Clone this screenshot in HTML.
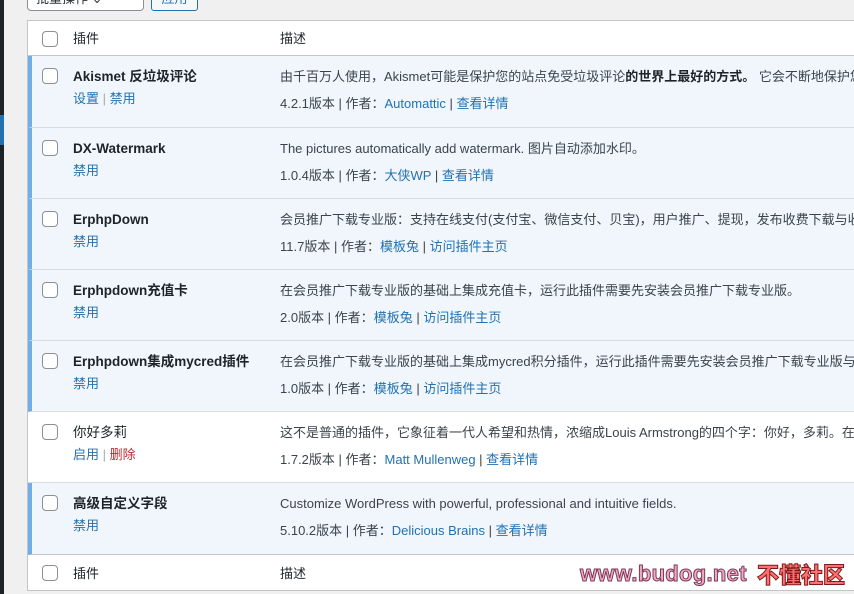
<!DOCTYPE html>
<html><head><meta charset="utf-8"><style>
*{margin:0;padding:0;box-sizing:border-box}
body{width:854px;height:594px;overflow:hidden;background:#f0f0f1;font-family:"Liberation Sans","Noto Sans CJK SC",sans-serif;font-size:13px;line-height:18px;color:#3c434a;position:relative}
div,span{line-height:18px}
.side{position:absolute;left:0;top:0;width:4px;height:594px;background:#1d2327}
.sel{position:absolute;left:27px;top:-12px;width:117px;height:23px;border:1px solid #8c8f94;border-radius:4px;background:#fff;font-size:13px;padding:0 8px;line-height:20px;color:#2c3338}
.btn{position:absolute;left:151px;top:-12px;width:47px;height:23px;border:1px solid #2271b1;border-radius:3px;background:#f6f7f7;color:#2271b1;text-align:center;line-height:20px}
.tbl{position:absolute;left:27px;top:20px;width:840px;height:571px;border:1px solid #c3c4c7;background:#fff}
.row{position:absolute;left:0;width:840px;border-bottom:1px solid #dcdcde}
.act{background:#f0f6fc;border-left:4px solid #72aee6}
.cb{position:absolute;left:14px;width:16px;height:16px;border:1px solid #8c8f94;border-radius:4px;background:#fff}
.t{position:absolute;left:45px;font-weight:bold;color:#1d2327;font-size:13.5px;white-space:nowrap}
.a{position:absolute;left:45px;color:#2271b1;white-space:nowrap}
.d{position:absolute;left:252px;white-space:nowrap}
.m{position:absolute;left:252px;white-space:nowrap}
a{color:#2271b1;text-decoration:none}
.sep{color:#a7aaad}
.del{color:#b32d2e}
.h{position:absolute;white-space:nowrap;color:#1d2327}
.wm{position:absolute;left:580px;top:562px;font-family:"Liberation Sans",sans-serif;font-weight:bold;font-size:22px;line-height:24px;color:#f0a8c8;-webkit-text-stroke:1px #7a3a55;letter-spacing:0.3px}
.wm2{position:absolute;left:757px;top:561px;font-family:"Noto Sans CJK SC",sans-serif;font-weight:900;font-size:22px;line-height:26px;color:#ff7070;-webkit-text-stroke:1px #7a1a1a}
</style></head><body>
<div class="side"></div>
<div style="position:absolute;left:0;top:115px;width:4px;height:30px;background:#2271b1"></div>
<div class="sel">批量操作 ⌄</div>
<div class="btn">应用</div>
<div class="tbl">
 <div class="row" style="top:0;height:35px;border-bottom:1px solid #c3c4c7"><div class="cb" style="top:10px"></div><span class="h" style="left:45px;top:9px">插件</span><span class="h" style="left:252px;top:9px">描述</span></div>

 <div class="row act" style="top:35px;height:72px"><div class="cb" style="top:12px;left:10px"></div>
  <div class="t" style="top:12px;left:41px">Akismet 反垃圾评论</div>
  <div class="a" style="top:34px;left:41px">设置 <span class="sep">|</span> 禁用</div>
  <div class="d" style="top:12px;left:248px">由千百万人使用，Akismet可能是保护您的站点免受垃圾评论<b style="color:#1d2327">的世界上最好的方式。</b> 它会不断地保护您</div>
  <div class="m" style="top:39px;left:248px">4.2.1版本 | 作者：<a>Automattic</a> | <a>查看详情</a></div></div>

 <div class="row act" style="top:107px;height:71px"><div class="cb" style="top:12px;left:10px"></div>
  <div class="t" style="top:12px;left:41px">DX-Watermark</div>
  <div class="a" style="top:34px;left:41px">禁用</div>
  <div class="d" style="top:12px;left:248px">The pictures automatically add watermark. 图片自动添加水印。</div>
  <div class="m" style="top:39px;left:248px">1.0.4版本 | 作者：<a>大侠WP</a> | <a>查看详情</a></div></div>

 <div class="row act" style="top:178px;height:71px"><div class="cb" style="top:12px;left:10px"></div>
  <div class="t" style="top:12px;left:41px">ErphpDown</div>
  <div class="a" style="top:34px;left:41px">禁用</div>
  <div class="d" style="top:12px;left:248px">会员推广下载专业版：支持在线支付(支付宝、微信支付、贝宝)，用户推广、提现，发布收费下载与收</div>
  <div class="m" style="top:39px;left:248px">11.7版本 | 作者：<a>模板兔</a> | <a>访问插件主页</a></div></div>

 <div class="row act" style="top:249px;height:71px"><div class="cb" style="top:12px;left:10px"></div>
  <div class="t" style="top:12px;left:41px">Erphpdown充值卡</div>
  <div class="a" style="top:34px;left:41px">禁用</div>
  <div class="d" style="top:12px;left:248px">在会员推广下载专业版的基础上集成充值卡，运行此插件需要先安装会员推广下载专业版。</div>
  <div class="m" style="top:39px;left:248px">2.0版本 | 作者：<a>模板兔</a> | <a>访问插件主页</a></div></div>

 <div class="row act" style="top:320px;height:71px"><div class="cb" style="top:12px;left:10px"></div>
  <div class="t" style="top:12px;left:41px">Erphpdown集成mycred插件</div>
  <div class="a" style="top:34px;left:41px">禁用</div>
  <div class="d" style="top:12px;left:248px">在会员推广下载专业版的基础上集成mycred积分插件，运行此插件需要先安装会员推广下载专业版与</div>
  <div class="m" style="top:39px;left:248px">1.0版本 | 作者：<a>模板兔</a> | <a>访问插件主页</a></div></div>

 <div class="row" style="top:391px;height:71px"><div class="cb" style="top:12px"></div>
  <div class="t" style="top:12px;font-weight:normal">你好多莉</div>
  <div class="a" style="top:34px">启用 <span class="sep">|</span> <span class="del">删除</span></div>
  <div class="d" style="top:12px">这不是普通的插件，它象征着一代人希望和热情，浓缩成Louis Armstrong的四个字：你好，多莉。在</div>
  <div class="m" style="top:39px">1.7.2版本 | 作者：<a>Matt Mullenweg</a> | <a>查看详情</a></div></div>

 <div class="row act" style="top:462px;height:72px;border-bottom:1px solid #c3c4c7"><div class="cb" style="top:12px;left:10px"></div>
  <div class="t" style="top:12px;left:41px">高级自定义字段</div>
  <div class="a" style="top:34px;left:41px">禁用</div>
  <div class="d" style="top:12px;left:248px">Customize WordPress with powerful, professional and intuitive fields.</div>
  <div class="m" style="top:39px;left:248px">5.10.2版本 | 作者：<a>Delicious Brains</a> | <a>查看详情</a></div></div>

 <div class="row" style="top:534px;height:36px;border-bottom:none"><div class="cb" style="top:10px"></div><span class="h" style="left:45px;top:10px">插件</span><span class="h" style="left:252px;top:10px">描述</span></div>
</div>
<div class="wm">www.budog.net</div>
<div class="wm2">不懂社区</div>
</body></html>
